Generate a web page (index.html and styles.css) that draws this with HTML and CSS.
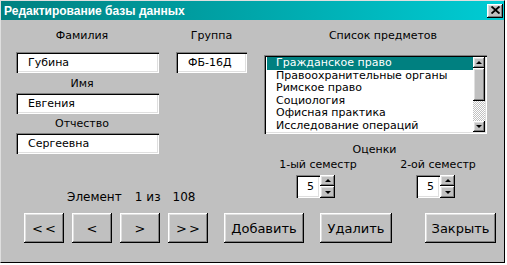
FILE: index.html
```html
<!DOCTYPE html>
<html lang="ru">
<head>
<meta charset="utf-8">
<title>Редактирование базы данных</title>
<link rel="stylesheet" href="styles.css">
</head>
<body>
<div class="window">
  <div class="titlebar">
    <span class="title">Редактирование базы данных</span>
    <span class="close"><svg width="9" height="8" viewBox="0 0 9 8"><path d="M0.5 0.5 L8.5 7.5 M8.5 0.5 L0.5 7.5" stroke="#000" stroke-width="1.9" fill="none"/></svg></span>
  </div>
  <div class="content">
    <div class="main">
      <div class="leftpart">
        <div class="fields">
          <div class="col1">
            <div class="label shift l-first">Фамилия</div>
            <div class="field">Губина</div>
            <div class="label shift l-name">Имя</div>
            <div class="field">Евгения</div>
            <div class="label shift l-pat">Отчество</div>
            <div class="field">Сергеевна</div>
          </div>
          <div class="col2">
            <div class="label l-first">Группа</div>
            <div class="field">ФБ-16Д</div>
          </div>
        </div>
        <div class="counter"><span>Элемент</span><span class="c-num">1</span><span class="c-iz">из</span><span class="c-total">108</span></div>
      </div>
      <div class="rightpart">
        <div class="label list-label">Список предметов</div>
        <div class="list">
          <div class="items">
            <div class="item selected">Гражданское право</div>
            <div class="item">Правоохранительные органы</div>
            <div class="item">Римское право</div>
            <div class="item">Социология</div>
            <div class="item">Офисная практика</div>
            <div class="item">Исследование операций</div>
          </div>
          <div class="scrollbar">
            <div class="sbtn"><span class="arrow up"></span></div>
            <div class="thumb"></div>
            <div class="track"></div>
            <div class="sbtn"><span class="arrow down"></span></div>
          </div>
        </div>
        <div class="label grades-label">Оценки</div>
        <div class="semesters">
          <div class="sem">
            <div class="label">1-ый семестр</div>
            <div class="spinner">
              <div class="spin-val">5</div>
              <div class="spin-btns">
                <div class="sp sp-up"><span class="arrow up"></span></div>
                <div class="sp sp-down"><span class="arrow down"></span></div>
              </div>
            </div>
          </div>
          <div class="sem">
            <div class="label">2-ой семестр</div>
            <div class="spinner">
              <div class="spin-val">5</div>
              <div class="spin-btns">
                <div class="sp sp-up"><span class="arrow up"></span></div>
                <div class="sp sp-down"><span class="arrow down"></span></div>
              </div>
            </div>
          </div>
        </div>
      </div>
    </div>
    <div class="buttons">
      <button class="btn nav">&lt;&lt;</button>
      <button class="btn nav">&lt;</button>
      <button class="btn nav">&gt;</button>
      <button class="btn nav">&gt;&gt;</button>
      <button class="btn add">Добавить</button>
      <button class="btn del">Удалить</button>
      <button class="btn cls">Закрыть</button>
    </div>
  </div>
</div>
</body>
</html>
```
FILE: styles.css
```css
* { box-sizing: border-box; margin: 0; padding: 0; }

body {
  background: #fff;
  font-family: "DejaVu Sans", sans-serif;
  font-size: 11px;
  color: #000;
}

.window {
  width: 505px;
  height: 263px;
  background: #c0c0c0;
  border-top: 1px solid #dfdfdf;
  border-left: 1px solid #dfdfdf;
  border-right: 1px solid #000;
  border-bottom: 1px solid #000;
  display: flex;
  flex-direction: column;
}

.titlebar {
  height: 19px;
  background: linear-gradient(to right, #008080, #00ccd4);
  display: flex;
  align-items: center;
  justify-content: space-between;
  padding: 0 1px 0 3px;
}

.title {
  font-family: "Liberation Sans", sans-serif;
  font-weight: bold;
  font-size: 12px;
  color: #fff;
}

.close {
  width: 16px;
  height: 14px;
  background: #c0c0c0;
  box-shadow: inset -1px -1px #000, inset 1px 1px #fff, inset -2px -2px #808080, inset 2px 2px #dfdfdf;
  display: flex;
  align-items: center;
  justify-content: center;
  padding-bottom: 1px;
}

.content {
  padding: 9px 0 0 15px;
}

.main { display: flex; }

.leftpart { width: 231px; }

.fields { display: flex; gap: 17px; }

.col1 { width: 143px; display: flex; flex-direction: column; }
.col2 { width: 71px; display: flex; flex-direction: column; }

.label {
  height: 13px;
  line-height: 13px;
  text-align: center;
  white-space: nowrap;
}

.shift { padding-right: 11px; }
.l-first { margin-bottom: 10px; }
.l-name { margin: 4px 0 3px; }
.l-pat { margin: 3px 0 3px; }

.field {
  height: 21px;
  line-height: 21px;
  background: #fff;
  padding-left: 12px;
  box-shadow: inset 1px 1px #808080, inset 2px 2px #000, inset -1px -1px #fff, inset -2px -2px #dfdfdf;
  white-space: nowrap;
}

.counter {
  margin-top: 37px;
  padding-left: 51px;
  height: 13px;
  line-height: 13px;
  font-size: 12px;
  white-space: nowrap;
}
.c-num { margin-left: 13px; }
.c-iz { margin-left: 4px; }
.c-total { margin-left: 12px; }

.rightpart {
  margin-left: 17px;
  width: 224px;
  display: flex;
  flex-direction: column;
}

.list-label { padding-left: 14px; }

.list {
  margin-top: 13px;
  width: 223px;
  height: 79px;
  background: #fff;
  padding: 2px;
  display: flex;
  box-shadow: inset 1px 1px #808080, inset 2px 2px #000, inset -1px -1px #fff, inset -2px -2px #dfdfdf;
}

.items {
  flex: 1;
  padding-left: 1px;
  overflow: hidden;
}

.item {
  height: 12.5px;
  line-height: 12.5px;
  padding-left: 9px;
  white-space: nowrap;
}

.item.selected {
  background: #008080;
  color: #fff;
}

.scrollbar {
  width: 12px;
  display: flex;
  flex-direction: column;
}

.sbtn, .thumb, .sp {
  background: #c0c0c0;
  box-shadow: inset -1px -1px #000, inset 1px 1px #fff, inset -2px -2px #808080, inset 2px 2px #dfdfdf;
  display: flex;
  align-items: center;
  justify-content: center;
}

.sbtn { height: 11px; }
.thumb { height: 33px; }

.track {
  flex: 1;
  background: repeating-conic-gradient(#c0c0c0 0 25%, #fff 0 50%) 0 0 / 2px 2px;
}

.arrow {
  width: 0;
  height: 0;
  border-left: 3px solid transparent;
  border-right: 3px solid transparent;
}
.arrow.up { border-bottom: 3px solid #000; }
.arrow.down { border-top: 3px solid #000; }

.grades-label { margin-top: 9px; padding-right: 3px; }

.semesters {
  margin-top: 2px;
  display: flex;
  padding-left: 16px;
  gap: 44px;
}

.sem {
  width: 76px;
  display: flex;
  flex-direction: column;
  align-items: center;
}

.spinner {
  margin-top: 4px;
  margin-right: 5px;
  display: flex;
}

.spin-val {
  width: 24px;
  height: 23px;
  line-height: 23px;
  background: #fff;
  text-align: right;
  padding-right: 6px;
  box-shadow: inset 1px 1px #808080, inset 2px 2px #000, inset -1px -1px #fff, inset -2px -2px #dfdfdf;
}

.spin-btns {
  width: 15px;
  display: flex;
  flex-direction: column;
}
.sp-up { height: 11px; }
.sp-down { height: 12px; }

.buttons {
  margin-top: 9px;
  padding-left: 8px;
  display: flex;
  gap: 8px;
}

.btn {
  height: 30px;
  border: none;
  background: #c0c0c0;
  font-family: "DejaVu Sans", sans-serif;
  font-size: 13px;
  color: #000;
  box-shadow: inset -1px -1px #000, inset 1px 1px #fff, inset -2px -2px #808080, inset 2px 2px #dfdfdf;
}

.nav { width: 40px; letter-spacing: 2px; text-indent: 2px; }
.add { width: 80px; margin-left: 8px; }
.del { width: 72px; margin-left: 8px; }
.cls { width: 71px; margin-left: 25px; }
```
